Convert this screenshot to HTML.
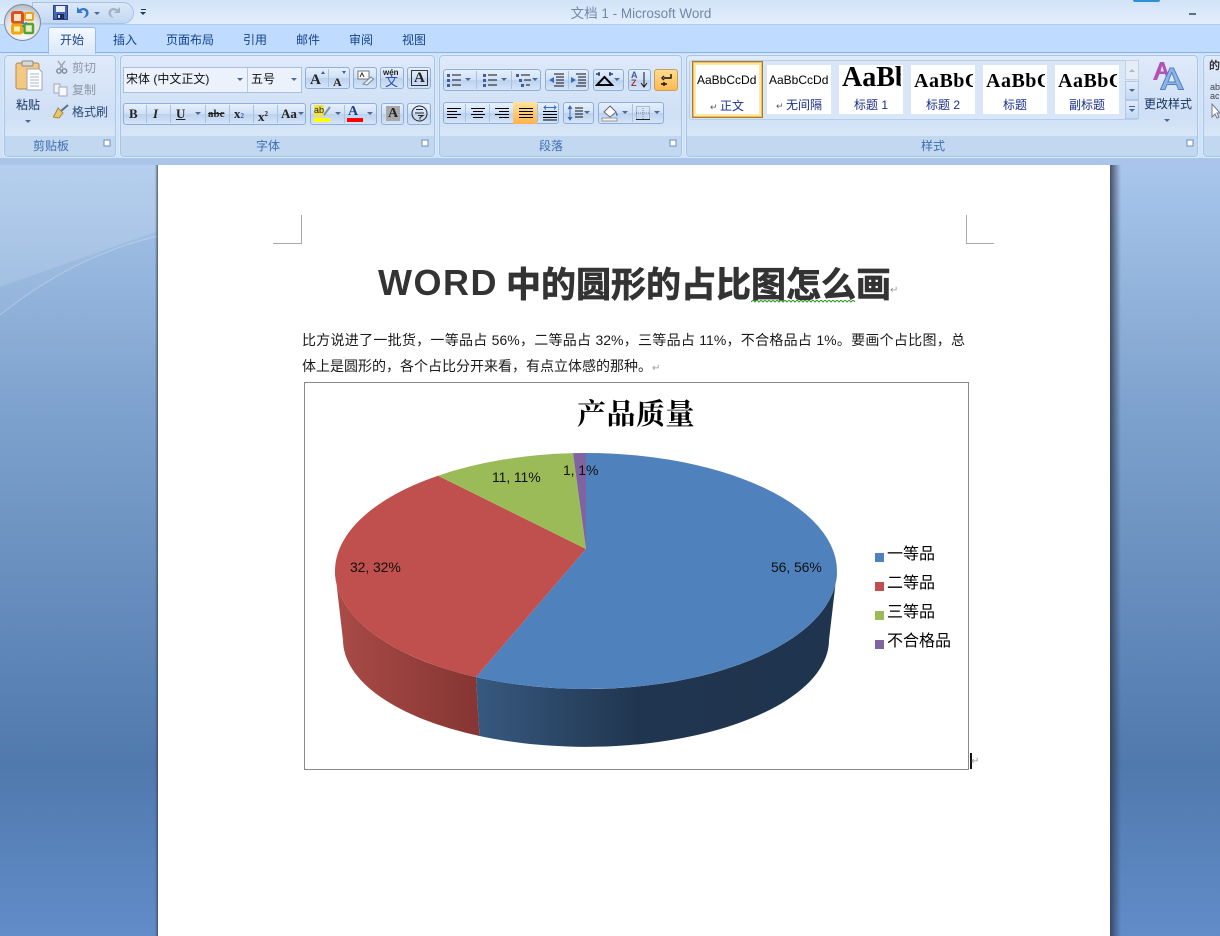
<!DOCTYPE html>
<html><head><meta charset="utf-8"><style>
html,body{margin:0;padding:0;width:1220px;height:936px;overflow:hidden}
body{position:relative;font-family:"Liberation Sans","WenQuanYi Zen Hei","Noto Sans CJK SC",sans-serif;font-size:12px;background:linear-gradient(#a9c7ec 160px,#7fa3ce 400px,#5079ad 765px,#618cc8 936px)}
div,span,svg{position:absolute;box-sizing:border-box}
.t{white-space:nowrap;line-height:14px;transform:translateX(-50%)}
.tab{color:#15428b;top:33px}
.grp{top:55px;height:102px;border:1px solid #a9c5e6;border-radius:4px;background:linear-gradient(#dfeafa,#cfdff5 60%,#d8e6f7 80px);box-shadow:0 0 0 1px #d9ebfb}
.grp i{position:absolute;left:0;right:0;bottom:0;height:20px;background:#c2d8f0;border-radius:0 0 3px 3px}
.lab{color:#3f6eb0;top:139px}
.b{height:22px;border:1px solid #8eafd6;border-radius:3px;background:linear-gradient(#e6f0fc,#cfe0f6 50%,#bdd2ee 51%,#d5e4f8)}
.d{top:1px;bottom:1px;width:1px;background:#a7c2e2}
.ar{width:0;height:0;border:3px solid transparent;border-top:3px solid #4a6a96;border-bottom:0}
.g{font-family:"Liberation Serif",serif;font-weight:bold;color:#222;white-space:nowrap;line-height:16px}
.sty{top:65px;width:64px;height:49px;background:#fff;overflow:hidden}
.sty b{position:absolute;left:0;top:1px;white-space:nowrap;color:#000;font-family:"Liberation Serif",serif;text-align:left;padding-left:3px}
.sty em{position:absolute;left:0;right:0;top:33px;text-align:center;font-style:normal;color:#1a2f8e;font-size:12px;line-height:14px;white-space:nowrap}
.para{font-size:14px;line-height:16px;color:#1a1a1a;white-space:nowrap;font-family:"Liberation Sans","WenQuanYi Zen Hei",sans-serif}
.lg{left:887px;font-size:16px;line-height:18px;color:#000;white-space:nowrap;font-family:"Liberation Sans","WenQuanYi Zen Hei",sans-serif}
.sw{left:875px;width:9px;height:9px}
.pl{font-size:14px;line-height:16px;color:#111;white-space:nowrap;font-family:"Liberation Sans",sans-serif;letter-spacing:-.1px}
</style></head><body>

<!-- workspace swoosh -->
<svg style="left:0;top:160px" width="158" height="180"><path d="M0 0H158V71L0 127Z" fill="#fff" opacity=".16"/><path d="M0 127L158 71V76C100 90 50 115 0 155Z" fill="#fff" opacity=".05"/><path d="M0 155C50 115 100 90 158 76" fill="none" stroke="#fff" stroke-opacity=".25" stroke-width="1"/></svg>

<!-- ribbon background -->
<div style="left:0;top:0;width:1220px;height:25px;background:linear-gradient(#d2e3f8,#e3eefc);border-bottom:1px solid #a9cdf4"></div>
<div style="left:0;top:25px;width:1220px;height:27px;background:#bfdbff"></div>
<div style="left:0;top:52px;width:1220px;height:108px;background:#d0e2f8;border-top:1px solid #8db2e3"></div>
<div style="left:0;top:158px;width:1220px;height:7px;background:#a9c5e9"></div>

<!-- QAT -->
<div style="left:32px;top:2px;width:102px;height:22px;border-radius:0 11px 11px 0;background:linear-gradient(#dce8f9,#c3d7f2);border:1px solid #a9c2e4"></div>
<!-- Office button -->
<div style="left:4px;top:4px;width:37px;height:37px;border-radius:50%;background:radial-gradient(circle at 50% 75%,#ffffff,#dfe3e8 55%,#98a3b0);border:1px solid #7f8b99"></div>
<svg style="left:10px;top:10px" width="26" height="26" viewBox="0 0 26 26"><rect x="2.500" y="2.500" width="10" height="10" rx="1.500" fill="#f7e3c4" stroke="#d9531e" stroke-width="3"/><rect x="15" y="3" width="8" height="7" rx="1" fill="#fff4d8" stroke="#f0a020" stroke-width="2"/><rect x="2.500" y="15" width="9" height="8" rx="1" fill="#fdf0b0" stroke="#f0a810" stroke-width="3"/><rect x="14.500" y="14" width="8.500" height="9" rx="1" fill="#dff0c8" stroke="#5aa02c" stroke-width="2.500"/><g fill="#3a80c8"><circle cx="13" cy="13" r="1.300"/><circle cx="16" cy="13" r="1"/><circle cx="13" cy="16" r="1"/></g></svg>
<!-- save -->
<svg style="left:53px;top:5px" width="15" height="15" viewBox="0 0 15 15"><rect x=".5" y=".5" width="14" height="14" fill="#4565b5" stroke="#2a3f80"/><rect x="3" y="1" width="9" height="6" fill="#e8eef8"/><rect x="4" y="9" width="7" height="5" fill="#1c2a55"/><rect x="5" y="10" width="2" height="3" fill="#cfd8ea"/></svg>
<!-- undo -->
<svg style="left:76px;top:6px" width="13" height="13" viewBox="0 0 13 13"><path d="M1 1V7H7L5 5C7 3.500 10 4.500 10 7C10 9 9 10.500 7 12C11 11.500 13 9 12.500 6C12 2.500 7 0.500 3.500 3.500Z" fill="#2f78cc"/></svg>
<div class="ar" style="left:94px;top:12px"></div>
<!-- redo -->
<svg style="left:108px;top:6px" width="13" height="13" viewBox="0 0 13 13"><path d="M12 1V7H6L8 5C6 3.500 3 4.500 3 7C3 9 4 10.500 6 12C2 11.500 0 9 0.500 6C1 2.500 6 0.500 9.500 3.500Z" fill="#a3b2c6"/></svg>
<div style="left:141px;top:9px;width:5px;height:1px;background:#1c3a66"></div>
<div class="ar" style="left:140px;top:12px;border-top-color:#1c3a66"></div>

<div class="t" style="left:641px;top:7px;font-size:13.500px;color:#7288a6">文档 1 - Microsoft Word</div>
<div style="left:1189px;top:13px;width:7px;height:2px;background:#5f7086"></div>
<div style="left:1133px;top:0;width:27px;height:2px;background:#2d8fd6;border-radius:0 0 14px 14px"></div>

<!-- tabs -->
<div style="left:48px;top:27px;width:48px;height:27px;background:linear-gradient(#f4f9ff,#dbe8f9);border:1px solid #9bbce4;border-bottom:0;border-radius:3px 3px 0 0"></div>
<div class="t tab" style="left:72px">开始</div><div class="t tab" style="left:125px">插入</div><div class="t tab" style="left:190px">页面布局</div><div class="t tab" style="left:255px">引用</div><div class="t tab" style="left:308px">邮件</div><div class="t tab" style="left:361px">审阅</div><div class="t tab" style="left:414px">视图</div>

<!-- groups -->
<div class="grp" style="left:4px;width:112px"><i></i></div>
<div class="grp" style="left:120px;width:315px"><i></i></div>
<div class="grp" style="left:439px;width:243px"><i></i></div>
<div class="grp" style="left:686px;width:512px"><i></i></div>
<div class="grp" style="left:1203px;width:30px"><i></i></div>
<div class="t lab" style="left:51px">剪贴板</div><div class="t lab" style="left:268px">字体</div><div class="t lab" style="left:551px">段落</div><div class="t lab" style="left:933px">样式</div>
<svg style="left:0;top:139px" width="1220" height="10"><g fill="#fff" stroke="#6f8db5"><rect x="104" y="1" width="6" height="6"/><rect x="422" y="1" width="6" height="6"/><rect x="670" y="1" width="6" height="6"/><rect x="1187" y="1" width="6" height="6"/></g></svg>

<!-- clipboard -->
<svg style="left:15px;top:60px" width="28" height="32" viewBox="0 0 28 32"><rect x="1" y="3" width="23" height="26" rx="2" fill="#f4c881" stroke="#b08a50"/><rect x="7" y="1" width="11" height="5" rx="1" fill="#d9d9d9" stroke="#888"/><path d="M12 9H24L27 12V30H12Z" fill="#fff" stroke="#9aa7b8"/><path d="M15 14H24M15 17H24M15 20H24M15 23H24M15 26H24" stroke="#a8b4c4"/></svg>
<div class="t" style="left:28px;top:98px;color:#15325f">粘贴</div>
<div class="ar" style="left:25px;top:120px"></div>
<svg style="left:55px;top:60px" width="14" height="14" viewBox="0 0 14 14"><path d="M3 1L8 8M10 1L5 8" stroke="#9aa5b2" stroke-width="1.500"/><circle cx="4" cy="11" r="2.200" fill="none" stroke="#7e8a98" stroke-width="1.400"/><circle cx="9.500" cy="11" r="2.200" fill="none" stroke="#7e8a98" stroke-width="1.400"/></svg>
<div style="left:72px;top:61px;color:#8d97a6;line-height:14px">剪切</div>
<svg style="left:53px;top:83px" width="15" height="14" viewBox="0 0 15 14"><path d="M1 1H7V10H1Z" fill="#eef1f5" stroke="#a0a9b5"/><path d="M6 4H14V13H6Z" fill="#f6f8fb" stroke="#a0a9b5"/></svg>
<div style="left:72px;top:83px;color:#8d97a6;line-height:14px">复制</div>
<svg style="left:53px;top:104px" width="16" height="15" viewBox="0 0 16 15"><path d="M8 7L15 1" stroke="#5a6f90" stroke-width="2"/><path d="M5 4L10 9L6 14L0 13C2 11 3 8 5 4Z" fill="#e6c76a" stroke="#a58a3c"/></svg>
<div style="left:72px;top:105px;color:#2c4a74;line-height:14px">格式刷</div>

<!-- font -->
<div style="left:123px;top:67px;width:179px;height:26px;background:#ebf2fc;border:1px solid #a9c1e0"></div>
<div style="left:247px;top:68px;width:1px;height:24px;background:#b4cae4"></div>
<div style="left:126px;top:72px;line-height:14px;color:#111;white-space:nowrap">宋体 (中文正文)</div>
<div style="left:251px;top:72px;line-height:14px;color:#111">五号</div>
<div class="ar" style="left:237px;top:78px"></div><div class="ar" style="left:291px;top:78px"></div>
<div class="b" style="left:305px;top:67px;width:45px"><div class="d" style="left:22px"></div></div>
<div class="g" style="left:310px;top:72px;font-size:15px">A</div><div class="g" style="left:333px;top:74px;font-size:12px">A</div>
<div style="left:321px;top:71px;width:0;height:0;border:2px solid transparent;border-top:0;border-bottom:3px solid #2f5fa8"></div>
<div style="left:342px;top:71px;width:0;height:0;border:2px solid transparent;border-bottom:0;border-top:3px solid #2f5fa8"></div>
<div class="b" style="left:353px;top:67px;width:24px"></div>
<svg style="left:357px;top:70px" width="17" height="16" viewBox="0 0 17 16"><rect x="1" y="1" width="11" height="8" fill="#fff" stroke="#777"/><path d="M6 14L14 7L16.500 9L10 15Z" fill="#e9edf3" stroke="#789"/><path d="M3 7L5 3L7 7" stroke="#333" fill="none"/></svg>
<div class="b" style="left:380px;top:67px;width:24px"></div>
<div style="left:383px;top:68px;font-size:8px;line-height:9px;font-weight:bold;color:#1c1c1c">wén</div>
<div style="left:385px;top:75px;font-size:13px;line-height:14px;color:#2c4fb0">文</div>
<div class="b" style="left:407px;top:67px;width:24px"></div>
<div class="g" style="left:411px;top:70px;font-size:15px;border:1px solid #333;padding:0 2px;height:16px;line-height:14px;">A</div>

<div class="b" style="left:123px;top:103px;width:183px"><div class="d" style="left:22px"></div><div class="d" style="left:46px"></div><div class="d" style="left:81px"></div><div class="d" style="left:105px"></div><div class="d" style="left:129px"></div><div class="d" style="left:153px"></div></div>
<div class="g" style="left:129px;top:106px;font-size:13px">B</div>
<div class="g" style="left:153px;top:106px;font-size:13px;font-style:italic">I</div>
<div class="g" style="left:176px;top:106px;font-size:13px;text-decoration:underline">U</div><div class="ar" style="left:195px;top:112px"></div>
<div class="g" style="left:208px;top:106px;font-size:11px;text-decoration:line-through">abc</div>
<div class="g" style="left:234px;top:106px;font-size:13px">x<span style="position:static;font-size:7px;color:#2f5fa8">2</span></div>
<div class="g" style="left:258px;top:106px;font-size:13px">x<span style="position:static;font-size:7px;vertical-align:5px">2</span></div>
<div class="g" style="left:281px;top:106px;font-size:13px">Aa</div><div class="ar" style="left:298px;top:112px"></div>
<div class="b" style="left:310px;top:103px;width:67px"><div class="d" style="left:33px"></div></div>
<div style="left:314px;top:105px;width:10px;height:12px;background:#f2e24a;font-size:9px;line-height:10px;color:#222">ab</div>
<svg style="left:323px;top:106px" width="9" height="11"><path d="M1 9L7 1" stroke="#8391a5" stroke-width="2"/></svg>
<div style="left:314px;top:118px;width:16px;height:4px;background:#ffff00"></div><div class="ar" style="left:335px;top:112px"></div>
<div class="g" style="left:348px;top:104px;font-size:14px;color:#223f86">A</div><div style="left:347px;top:118px;width:16px;height:4px;background:#ff0000"></div><div class="ar" style="left:367px;top:112px"></div>
<div class="b" style="left:381px;top:103px;width:23px"></div>
<div class="g" style="left:386px;top:106px;width:14px;height:15px;background:#a8a8a8;font-size:14px;text-align:center">A</div>
<div class="b" style="left:407px;top:103px;width:24px"></div>
<svg style="left:411px;top:105px" width="17" height="17" viewBox="0 0 17 17"><circle cx="8.500" cy="8.500" r="7.500" fill="none" stroke="#222"/><path d="M5 4.500H12M4 8H13M7 10.500H12L9 12.500V14.500" stroke="#222" fill="none"/></svg>

<!-- paragraph row 1 -->
<div class="b" style="left:443px;top:69px;width:98px"><div class="d" style="left:32px"></div><div class="d" style="left:67px"></div></div>
<svg style="left:446px;top:71px" width="95" height="18" viewBox="0 0 95 18" fill="none"><g stroke="#111"><path d="M6 4H15M6 9H15M6 14H15M42 4H51M42 9H51M42 14H51M75 4H84M78 9H85M80 14H84"/></g><g fill="#3f5d9c"><rect x="1" y="3" width="3" height="3"/><rect x="1" y="8" width="3" height="3"/><rect x="1" y="13" width="3" height="3"/><rect x="37" y="3" width="3" height="3"/><rect x="37" y="8" width="3" height="3"/><rect x="37" y="13" width="3" height="3"/><rect x="70" y="3" width="3" height="3"/><rect x="73" y="8" width="3" height="3"/><rect x="75" y="13" width="3" height="3"/></g></svg>
<div class="ar" style="left:465px;top:78px"></div><div class="ar" style="left:501px;top:78px"></div><div class="ar" style="left:532px;top:78px"></div>
<div class="b" style="left:545px;top:69px;width:44px"><div class="d" style="left:22px"></div></div>
<svg style="left:548px;top:73px" width="40" height="14" viewBox="0 0 40 14" fill="none"><path d="M6 1H16M8 4H16M8 7H16M8 10H16M6 13H16M28 1H38M30 4H38M30 7H38M30 10H38M28 13H38" stroke="#111"/><path d="M1 7L6 4V10Z M28 7L23 4V10Z" fill="#3a6ac0"/></svg>
<div class="b" style="left:593px;top:69px;width:31px"></div>
<svg style="left:595px;top:71px" width="19" height="16" viewBox="0 0 19 16" fill="none"><path d="M2 14H17L9.500 6Z" stroke="#000" stroke-width="2" stroke-linejoin="miter"/><path d="M1 3H5M4 1V5M14 3H18M15 1V5" stroke="#1f3f86" stroke-width="1.400"/></svg><div class="ar" style="left:614px;top:78px"></div>
<div class="b" style="left:628px;top:69px;width:23px"></div>
<div style="left:631px;top:71px;font-size:9px;line-height:9px;font-weight:bold;color:#3a5ca8">A</div><div style="left:631px;top:79px;font-size:9px;line-height:9px;font-weight:bold;color:#a03a3a">Z</div>
<svg style="left:640px;top:72px" width="8" height="16"><path d="M4 0V14M1 11L4 15L7 11" stroke="#111" fill="none"/></svg>
<div class="b" style="left:654px;top:69px;width:24px;background:linear-gradient(#ffdc8e,#ffb951);border-color:#c9a05a"></div>
<svg style="left:658px;top:72px" width="16" height="16" viewBox="0 0 16 16" fill="none"><path d="M13 2V6H6M6 4L4 6L6 8M6 10V14M3 12H9" stroke="#111" stroke-width="1.400"/></svg>

<!-- paragraph row 2 -->
<div class="b" style="left:443px;top:102px;width:116px"><div class="d" style="left:21px"></div><div class="d" style="left:45px"></div><div class="d" style="left:69px"></div><div class="d" style="left:93px"></div></div>
<div style="left:513px;top:102px;width:24px;height:22px;background:linear-gradient(#ffe3a0,#ffb24a)"></div>
<svg style="left:446px;top:105px" width="112" height="16" viewBox="0 0 112 16" fill="none" stroke="#000"><path d="M1 3.500H15M1 6.500H11M1 9.500H15M1 12.500H11M25 3.500H39M27 6.500H37M25 9.500H39M27 12.500H37M49 3.500H63M53 6.500H63M49 9.500H63M53 12.500H63M73 3.500H87M73 6.500H87M73 9.500H87M73 12.500H87M97 6.500H111M97 9.500H111M97 12.500H111M97 15H111"/><path d="M98 2.500H110M100 .5L98 2.500L100 4.500M108 .5L110 2.500L108 4.500" stroke="#3a6ac0"/></svg>
<div class="b" style="left:563px;top:102px;width:31px"></div>
<svg style="left:567px;top:105px" width="17" height="16" viewBox="0 0 17 16" fill="none"><path d="M3 1V15" stroke="#3a6ac0"/><path d="M1 4L3 1L5 4M1 12L3 15L5 12" stroke="#3a6ac0" fill="#3a6ac0"/><path d="M8 3H16M8 6H16M8 9H16M8 12H16" stroke="#111"/></svg><div class="ar" style="left:584px;top:111px"></div>
<div class="b" style="left:598px;top:102px;width:66px"><div class="d" style="left:33px"></div></div>
<svg style="left:601px;top:104px" width="18" height="18" viewBox="0 0 18 18"><path d="M3 8L9 2L15 8L9 13Z" fill="#fff" stroke="#667"/><path d="M15 8C17 10 17 12 16 12C15 12 15 10 15 8Z" fill="#3a6ac0"/><rect x="1" y="14" width="15" height="3" fill="#f2f2f2" stroke="#999"/></svg>
<div class="ar" style="left:622px;top:111px"></div>
<svg style="left:636px;top:106px" width="14" height="14" fill="none"><rect x=".5" y=".5" width="13" height="13" stroke="#7a8aa0" stroke-dasharray="1 1"/><path d="M7 0V14M0 7H14" stroke="#7a8aa0" stroke-dasharray="1 1"/><path d="M0 13.500H14" stroke="#222"/></svg>
<div class="ar" style="left:654px;top:111px"></div>

<!-- styles gallery -->
<div style="left:689px;top:60px;width:450px;height:60px;border:1px solid #b6cce8;border-radius:3px;background:#d9e6f7"></div>
<div style="left:692px;top:61px;width:71px;height:57px;background:#fff;border:2px solid #f5bc4e;box-shadow:inset 0 0 0 2px #ffe8a8;outline:1px solid #a37a3a;outline-offset:-1px"></div>
<div style="left:697px;top:73px;font-size:12px;line-height:14px;color:#000;white-space:nowrap">AaBbCcDd</div>
<div style="left:710px;top:99px;line-height:14px;color:#1a2f8e;white-space:nowrap"><span style="position:static;color:#556;font-size:9px">↵ </span>正文</div>
<div class="sty" style="left:767px"><b style="font-family:'Liberation Sans',sans-serif;font-weight:normal;font-size:12px;top:8px;padding-left:2px">AaBbCcDd</b><em><span style="position:static;color:#556;font-size:9px">↵ </span>无间隔</em></div>
<div class="sty" style="left:839px;width:62px"><b style="font-size:28px;line-height:28px;top:-1px">AaBb</b><em style="right:-2px">标题 1</em></div>
<div class="sty" style="left:911px;width:62px"><b style="font-size:20px;line-height:24px;top:4px;letter-spacing:.5px">AaBbC</b><em style="right:-2px">标题 2</em></div>
<div class="sty" style="left:983px;width:62px"><b style="font-size:20px;line-height:24px;top:4px;letter-spacing:.5px">AaBbC</b><em style="right:-2px">标题</em></div>
<div class="sty" style="left:1055px;width:62px"><b style="font-size:20px;line-height:24px;top:4px;letter-spacing:.5px">AaBbC</b><em style="right:-2px">副标题</em></div>
<div style="left:901px;top:65px;width:2px;height:49px;background:#fff"></div><div style="left:973px;top:65px;width:2px;height:49px;background:#fff"></div><div style="left:1045px;top:65px;width:2px;height:49px;background:#fff"></div><div style="left:1117px;top:65px;width:2px;height:49px;background:#fff"></div>
<div style="left:1125px;top:60px;width:14px;height:20px;background:#e6edf6;border:1px solid #c3d3e7"></div>
<div style="left:1125px;top:81px;width:14px;height:19px;background:linear-gradient(#e0ebfa,#c5d9f2);border:1px solid #b0c8e6"></div>
<div style="left:1125px;top:100px;width:14px;height:19px;background:linear-gradient(#e0ebfa,#c5d9f2);border:1px solid #b0c8e6"></div>
<div class="ar" style="left:1129px;top:69px;border-top:0;border-bottom:3px solid #aeb9c7"></div>
<div class="ar" style="left:1129px;top:89px"></div>
<div class="ar" style="left:1129px;top:109px"></div><div style="left:1129px;top:106px;width:6px;height:1px;background:#4a6a96"></div>
<!-- change styles -->
<svg style="left:1151px;top:60px" width="36" height="32" viewBox="0 0 36 32"><path d="M2 20L9 2H13L18 17H15L14 14H8.500L6 20ZM9.500 11.500H13L11 5.500Z" fill="#b44fb5" fill-rule="evenodd"/><path d="M9.500 29.500L19 8H22.500L32.500 29.500H27.500L25.500 24.500H16L14 29.500ZM17 22H24.500L20.800 12.500Z" fill="#8fb4e6" stroke="#4f7fc4" fill-rule="evenodd"/></svg>
<div class="t" style="left:1168px;top:97px;color:#15325f">更改样式</div>
<div class="ar" style="left:1164px;top:119px"></div>
<!-- find group -->
<div style="left:1209px;top:60px;font-size:11px;line-height:12px;color:#333;font-weight:bold">的</div>
<div style="left:1210px;top:83px;font-size:9px;line-height:9px;color:#444">ab<br>ac</div>
<svg style="left:1211px;top:103px" width="9" height="16"><path d="M1 1V14L4 11L6 15L8 14L6 10H9Z" fill="#fff" stroke="#778"/></svg>

<!-- page -->
<div style="left:155px;top:165px;width:3px;height:771px;background:linear-gradient(90deg,rgba(60,70,90,0),rgba(60,70,90,.8))"></div>
<div style="left:1110px;top:165px;width:11px;height:771px;background:linear-gradient(90deg,rgba(50,60,85,.85),rgba(50,60,85,0))"></div>
<div style="left:158px;top:165px;width:952px;height:771px;background:#fff"></div>
<!-- crop marks -->
<div style="left:301px;top:215px;width:1px;height:29px;background:#aaa"></div><div style="left:273px;top:243px;width:28px;height:1px;background:#aaa"></div>
<div style="left:966px;top:215px;width:1px;height:29px;background:#aaa"></div><div style="left:966px;top:243px;width:28px;height:1px;background:#aaa"></div>

<div style="left:378px;top:258px;font-family:'Liberation Sans',sans-serif;font-weight:bold;font-size:36px;line-height:50px;color:#333;white-space:nowrap;letter-spacing:1.500px">WORD</div>
<div style="left:506px;top:258px;font-family:'Noto Sans CJK SC',sans-serif;font-weight:bold;font-size:35px;line-height:50px;color:#333;white-space:nowrap;-webkit-text-stroke:.7px #333">中的圆形的占比图怎么画</div>
<div style="left:890px;top:285px;font-size:10px;line-height:12px;color:#999">↵</div>
<svg style="left:751px;top:300px" width="106" height="4"><path d="M0 2 l2 -2 l2 2 l2 -2 l2 2 l2 -2 l2 2 l2 -2 l2 2 l2 -2 l2 2 l2 -2 l2 2 l2 -2 l2 2 l2 -2 l2 2 l2 -2 l2 2 l2 -2 l2 2 l2 -2 l2 2 l2 -2 l2 2 l2 -2 l2 2 l2 -2 l2 2 l2 -2 l2 2 l2 -2 l2 2 l2 -2 l2 2 l2 -2 l2 2 l2 -2 l2 2 l2 -2 l2 2 l2 -2 l2 2 l2 -2 l2 2 l2 -2 l2 2 l2 -2 l2 2 l2 -2 l2 2 l2 -2 l2 2" fill="none" stroke="#2a9a2a"/></svg>
<div class="para" style="left:302px;top:332px;width:663px;text-align:justify;text-align-last:justify">比方说进了一批货，一等品占 56%，二等品占 32%，三等品占 11%，不合格品占 1%。要画个占比图，总</div>
<div class="para" style="left:302px;top:358px">体上是圆形的，各个占比分开来看，有点立体感的那种。<span style="position:static;color:#999;font-size:10px">↵</span></div>

<!-- chart -->
<div style="left:304px;top:382px;width:665px;height:388px;border:1px solid #888;background:#fff"></div>
<div style="left:577px;top:392px;font-family:'Noto Serif CJK SC',serif;font-weight:bold;font-size:29px;line-height:42px;color:#000;white-space:nowrap;letter-spacing:.5px">产品质量</div>
<svg style="left:304px;top:382px" width="665" height="388" viewBox="304 382 665 388">
<defs>
<linearGradient id="r" gradientUnits="userSpaceOnUse" x1="335" y1="0" x2="479" y2="0"><stop offset="0" stop-color="#aa4b47"/><stop offset="1" stop-color="#853533"/></linearGradient>
<linearGradient id="bl" gradientUnits="userSpaceOnUse" x1="476" y1="0" x2="837" y2="0"><stop offset="0" stop-color="#37597f"/><stop offset=".45" stop-color="#20354f"/><stop offset="1" stop-color="#1f344e"/></linearGradient>
</defs>
<path d="M335 571A251 118 0 0 0 476 677.070L479.500 736A243 107 0 0 1 343 640Z" fill="url(#r)"/>
<path d="M476 677.070A251 118 0 0 0 837 571L829 640A243 107 0 0 1 479.500 736Z" fill="url(#bl)"/>
<path d="M586 549L586 453A251 118 0 1 1 476 677.070Z" fill="#4f81bd"/>
<path d="M586 549L476 677.070A251 118 0 0 1 438 475.700Z" fill="#c0504d"/>
<path d="M586 549L438 475.700A251 118 0 0 1 573 453.160Z" fill="#9bbb59"/>
<path d="M586 549L573 453.160A251 118 0 0 1 586 453Z" fill="#8064a2"/>
</svg>
<div class="pl" style="left:492px;top:469px">11, 11%</div>
<div class="pl" style="left:563px;top:462px">1, 1%</div>
<div class="pl" style="left:350px;top:559px">32, 32%</div>
<div class="pl" style="left:771px;top:559px">56, 56%</div>
<div class="sw" style="left:875px;top:553px;background:#4f81bd"></div><div class="lg" style="top:546px">一等品</div>
<div class="sw" style="left:875px;top:582px;background:#c0504d"></div><div class="lg" style="top:575px">二等品</div>
<div class="sw" style="left:875px;top:611px;background:#9bbb59"></div><div class="lg" style="top:604px">三等品</div>
<div class="sw" style="left:875px;top:640px;background:#8064a2"></div><div class="lg" style="top:633px">不合格品</div>
<div style="left:970px;top:753px;width:2px;height:16px;background:#111"></div>
<div style="left:971px;top:756px;font-size:10px;line-height:12px;color:#999">↵</div>
</body></html>
